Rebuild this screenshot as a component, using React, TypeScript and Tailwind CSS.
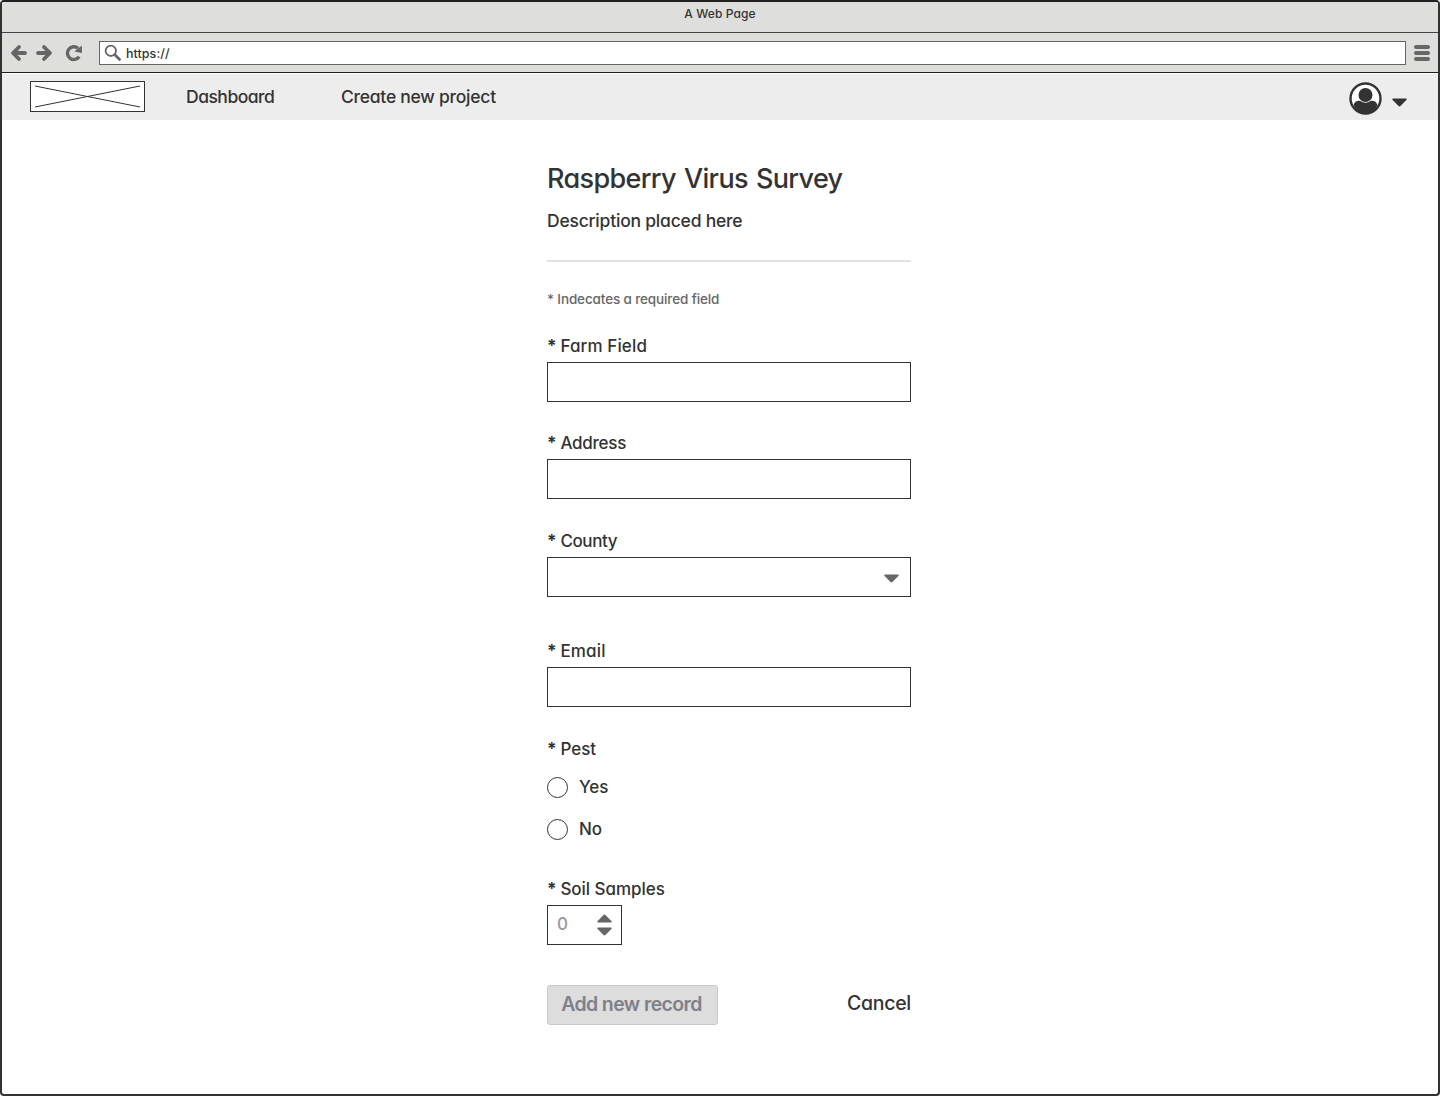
import React from "react";

function Caret({ className, up = false }: { className: string; up?: boolean }) {
  return (
    <svg className={className} viewBox="0 0 15 9" fill="currentColor" aria-hidden="true">
      <path d={up ? "M0.4 7.2 L6.3 1.2 Q7.5 0 8.7 1.2 L14.6 7.2 Q15 8.5 13.8 8.5 H1.2 Q0 8.5 0.4 7.2Z" : "M0.4 1.8 L6.3 7.8 Q7.5 9 8.7 7.8 L14.6 1.8 Q15 0.5 13.8 0.5 H1.2 Q0 0.5 0.4 1.8Z"} />
    </svg>
  );
}

function Label({ text, className }: { text: string; className: string }) {
  return (
    <div className={`flex h-6 text-[17px] leading-6 font-medium whitespace-nowrap ${className}`}>
      <span className="w-[13.4px] shrink-0 font-bold">*</span>
      <span>{text}</span>
    </div>
  );
}

function Box() {
  return <input className="mt-1 block h-10 w-full border border-[#333] bg-white px-2 outline-none" />;
}

function Radio({ text, className }: { text: string; className: string }) {
  return (
    <label className={`flex h-[21px] items-start text-[17px] font-medium ${className}`}>
      <span className="size-[21px] rounded-full border-[1.3px] border-[#333]" />
      <span className="ml-[11px] leading-5 tracking-[-0.1px]">{text}</span>
    </label>
  );
}

export default function App() {
  return (
    <div className="h-[1096px] w-[1440px] bg-white font-['Inter','Liberation_Sans',sans-serif] text-[#333] [font-feature-settings:'cv11']">
      <div className="flex h-full flex-col overflow-hidden rounded-[4px] border-2 border-[#333335] border-t-[#231f20]">
        <div className="h-[30px] bg-[#dededc] text-center text-[12px] leading-[23px] font-medium tracking-[0.1px]">A Web Page</div>
        <div className="flex h-[41px] items-center border-y border-t-[#444] border-b-[#231f20] bg-[#dededc]">
          <svg className="ml-2 h-[18px] w-[18px] text-[#666]" viewBox="0 0 18 18" fill="none" stroke="currentColor" strokeWidth="3.8" strokeLinecap="round" strokeLinejoin="round">
            <path d="M9 3 L3 9 L9 15 M3.5 9 H15" />
          </svg>
          <svg className="ml-[7px] h-[18px] w-[18px] text-[#666]" viewBox="0 0 18 18" fill="none" stroke="currentColor" strokeWidth="3.8" strokeLinecap="round" strokeLinejoin="round">
            <path d="M9 3 L15 9 L9 15 M14.5 9 H3" />
          </svg>
          <svg className="ml-3 h-[18px] w-[18px] text-[#666]" viewBox="0 0 18 18" fill="none">
            <path d="M13 4.3 A6.4 6.4 0 1 0 14.2 12.6" stroke="currentColor" strokeWidth="3.4" />
            <path d="M16.8 1.4 L17 9 L9.4 7.6Z" fill="currentColor" />
          </svg>
          <div className="ml-4 flex h-6 w-[1307px] items-center border border-[#666] bg-white">
            <svg className="ml-1 h-[18px] w-[18px] text-[#666]" viewBox="0 0 18 18" fill="none" stroke="currentColor">
              <circle cx="6.8" cy="6.8" r="5.2" strokeWidth="1.8" />
              <path d="M10.8 10.8 L15.6 15.4" strokeWidth="2.8" strokeLinecap="round" />
            </svg>
            <span className="mt-0.5 ml-1 text-[12.5px] leading-5 font-medium tracking-[0.05px]">https://</span>
          </div>
          <div className="ml-2 flex w-4 flex-col gap-0.5">
            <span className="h-1 rounded-full bg-[#666]" />
            <span className="h-1 rounded-full bg-[#666]" />
            <span className="h-1 rounded-full bg-[#666]" />
          </div>
        </div>
        <nav className="flex h-[47px] shrink-0 border-t border-white bg-[#ededed] text-[17.5px] leading-6 font-medium">
          <svg className="mt-[7px] ml-7 h-[31px] w-[115px]" viewBox="0 0 115 31" fill="none" stroke="#333">
            <rect x="0.5" y="0.5" width="114" height="30" fill="white" />
            <path d="M5 5 L110 26 M5 26 L110 5" />
          </svg>
          <span className="mt-[11px] ml-[41px] w-[155px] tracking-[-0.5px]">Dashboard</span>
          <span className="mt-[11px] tracking-[-0.25px]">Create new project</span>
          <svg className="mt-2 mr-[10px] ml-auto h-[33px] w-[33px]" viewBox="0 0 33 33">
            <circle cx="16.5" cy="16.5" r="15" fill="white" stroke="#333" strokeWidth="2.4" />
            <path d="M4.5 23 Q6 18.2 11 18.7 Q16.5 22.8 22 18.7 Q27 18.2 28.5 23 Q25 31.5 16.5 31.5 Q8 31.5 4.5 23Z" fill="#333" />
            <circle cx="16.5" cy="13" r="7" fill="#333" />
          </svg>
          <Caret className="mt-6 mr-[31.5px] h-[9px] w-[15px]" />
        </nav>
        <main className="ml-[545px] w-[364px]">
          <h1 className="mt-[43px] text-[27px] leading-8 font-medium tracking-[-0.65px] whitespace-nowrap [word-spacing:1.5px]">Raspberry Virus Survey</h1>
          <p className="mt-3.5 text-[17.5px] leading-6 font-medium tracking-[-0.21px]">Description placed here</p>
          <div className="mt-[27px] h-0.5 bg-[#e3e3e3]" />
          <p className="mt-[27px] text-[13.5px] leading-5 font-medium tracking-[-0.13px] text-[#666]">* Indecates a required field</p>
          <Label text="Farm Field" className="mt-[25px] tracking-[0.12px]" />
          <Box />
          <Label text="Address" className="mt-[29px] tracking-[-0.25px]" />
          <Box />
          <Label text="County" className="mt-[30px] tracking-[-0.4px]" />
          <button className="mt-1 flex h-10 w-full items-center justify-end border border-[#333] bg-white pt-0.5 pr-[11.5px] text-[#666]" aria-label="County">
            <Caret className="h-[9px] w-[15px]" />
          </button>
          <Label text="Email" className="mt-[42px] tracking-[0.15px]" />
          <Box />
          <Label text="Pest" className="mt-[30px]" />
          <Radio text="Yes" className="mt-4" />
          <Radio text="No" className="mt-[21px]" />
          <Label text="Soil Samples" className="mt-[37px] tracking-[-0.04px]" />
          <div className="mt-1 flex h-10 w-[75px] items-center border border-[#333] bg-white pr-[9.5px] pl-[9px]">
            <span className="-mt-px text-[17px] font-medium text-[#999]">0</span>
            <span className="ml-auto flex flex-col gap-1 text-[#666]">
              <Caret up className="h-[9px] w-[15px]" />
              <Caret className="h-[9px] w-[15px]" />
            </span>
          </div>
          <div className="mt-10 flex h-10 items-start justify-between text-[19.5px] whitespace-nowrap">
            <button className="h-10 w-[171px] rounded-[3px] border border-[#c8cac9] bg-[#ddd] pr-0.5 font-semibold tracking-[-0.6px] text-[#80808a]">Add new record</button>
            <button className="h-[38px] font-medium tracking-[-0.3px]">Cancel</button>
          </div>
        </main>
      </div>
    </div>
  );
}
